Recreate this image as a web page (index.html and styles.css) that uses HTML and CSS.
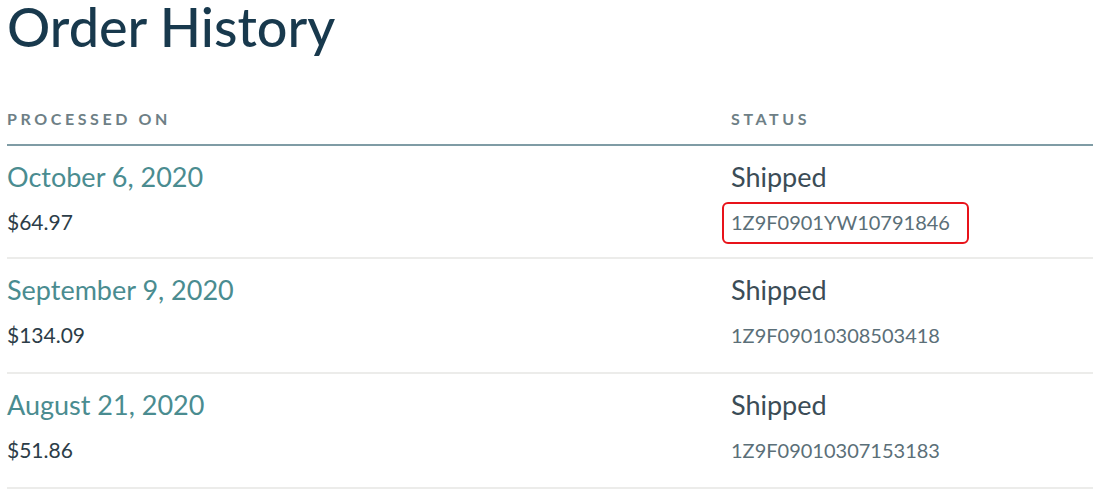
FILE: index.html
```html
<!DOCTYPE html>
<html lang="en">
<head>
<meta charset="utf-8">
<title>Order History</title>
<link rel="stylesheet" href="styles.css">
</head>
<body>
<main class="page">
  <h1 class="title">Order History</h1>
  <div class="orders">
    <div class="row head">
      <div class="col">Processed On</div>
      <div class="col">Status</div>
    </div>
    <div class="row order">
      <div class="col">
        <div class="date">October 6, 2020</div>
        <div class="price">$64.97</div>
      </div>
      <div class="col">
        <div class="status">Shipped</div>
        <div class="track"><span class="hl">1Z9F0901YW10791846</span></div>
      </div>
    </div>
    <div class="row order">
      <div class="col">
        <div class="date">September 9, 2020</div>
        <div class="price">$134.09</div>
      </div>
      <div class="col">
        <div class="status">Shipped</div>
        <div class="track">1Z9F09010308503418</div>
      </div>
    </div>
    <div class="row order">
      <div class="col">
        <div class="date">August 21, 2020</div>
        <div class="price">$51.86</div>
      </div>
      <div class="col">
        <div class="status">Shipped</div>
        <div class="track">1Z9F09010307153183</div>
      </div>
    </div>
  </div>
</main>
</body>
</html>
```
FILE: styles.css
```css
html, body {
  margin: 0;
  padding: 0;
  background: #ffffff;
}
body {
  font-family: Lato, "Noto Sans", "Liberation Sans", sans-serif;
}
.page {
  padding: 0 10px 0 7px;
}
.title {
  margin: 0;
  font-size: 54px;
  line-height: 54px;
  font-weight: 500;
  color: #18394d;
  padding-top: 0;
}
.orders {
  margin-top: 53px;
}
.row {
  display: grid;
  grid-template-columns: 724px 1fr;
}
.head {
  border-bottom: 2px solid #7f9ca5;
  padding-top: 2px;
  padding-bottom: 15px;
  font-size: 16px;
  line-height: 20px;
  font-weight: 700;
  letter-spacing: 3.6px;
  text-transform: uppercase;
  color: #6e7f86;
}
.order {
  border-bottom: 2px solid #ececea;
  padding: 16px 0 0;
  height: 115px;
  box-sizing: border-box;
}
.head + .order {
  height: 113px;
}
.date, .status {
  font-size: 27px;
  line-height: 30px;
}
.date {
  color: #4a8c90;
}
.status {
  color: #3b4c56;
}
.price, .track {
  margin-top: 17px;
  line-height: 26px;
}
.price {
  font-size: 21px;
  color: #2c3d48;
}
.track {
  font-size: 20px;
  color: #5b6f78;
}
.hl {
  display: inline-block;
  margin: -7px -19px -8px -9px;
  padding: 5px 17px 7px 7px;
  border: 2px solid #e8131a;
  border-radius: 6px;
}
```
